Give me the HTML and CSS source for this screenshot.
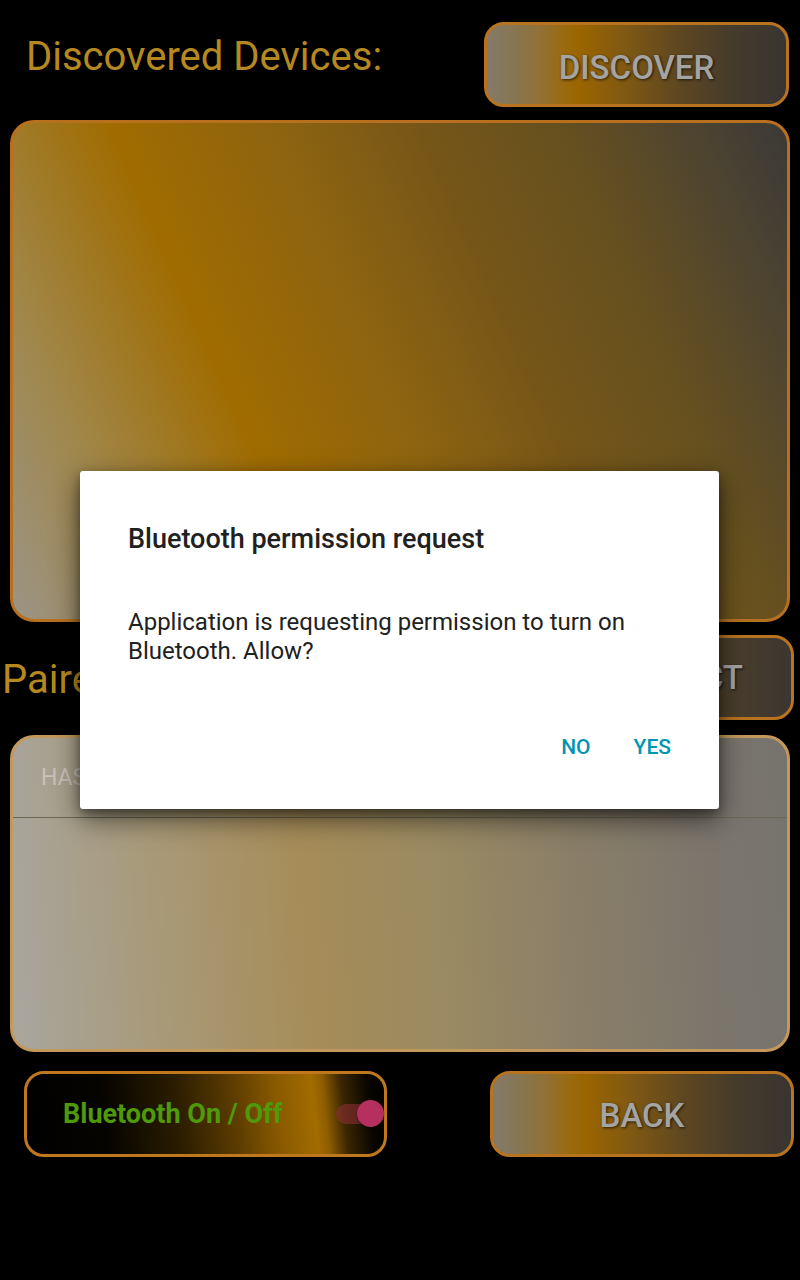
FILE: index.html
```html
<!DOCTYPE html>
<html>
<head>
<meta charset="utf-8">
<link rel="stylesheet" href="styles.css">
</head>
<body>
<div class="screen">
  <div class="head-row">
    <div class="heading">Discovered Devices:</div>
    <div class="btn btn-gold btn-discover">DISCOVER</div>
  </div>
  <div class="panel panel-discovered"></div>

  <div class="head-row paired-row">
    <div class="heading heading-paired">Paired Devices:</div>
    <div class="btn btn-gold btn-disconnect">DISCONNECT</div>
  </div>
  <div class="panel panel-paired">
    <div class="tab-head">HAS NO PAIRED DEVICES</div>
  </div>

  <div class="foot-row">
    <div class="toggle-btn">
      <span class="toggle-label">Bluetooth On / Off</span>
      <span class="switch"><span class="switch-track"></span><span class="switch-thumb"></span></span>
    </div>
    <div class="btn btn-gold btn-back">BACK</div>
  </div>

  <div class="dialog">
    <div class="dialog-title">Bluetooth permission request</div>
    <div class="dialog-msg">Application is requesting permission to turn on Bluetooth. Allow?</div>
    <div class="dialog-actions">
      <span class="dialog-btn">NO</span>
      <span class="dialog-btn">YES</span>
    </div>
  </div>
</div>
</body>
</html>
```

FILE: styles.css
```css
* { box-sizing: border-box; }
html, body { margin: 0; padding: 0; background: #000; }
body { font-family: Roboto, "Noto Sans", sans-serif; }

.screen {
  position: relative;
  width: 800px;
  height: 1280px;
  background: #000;
  overflow: hidden;
  display: flex;
  flex-direction: column;
}

.head-row {
  display: flex;
  justify-content: space-between;
  align-items: flex-start;
  padding: 22px 11px 0 26px;
}

.heading {
  margin-top: 13px;
  font-size: 40px;
  line-height: 44px;
  color: #b5891f;
  font-weight: 400;
}

.btn {
  display: flex;
  align-items: center;
  justify-content: center;
  height: 85px;
  border: 3px solid #b8731f;
  border-radius: 20px;
  font-size: 33px;
  font-weight: 500;
  color: #a4a4a4;
  text-shadow: 1px 1px 3px rgba(0,0,0,0.7);
}

.btn-discover {
  padding-top: 5px;
}

.btn-gold {
  width: 305px;
  background: linear-gradient(to right, #847a6a 0%, #867652 9%, #927034 18%, #9a6a0e 26%, #9b6500 31%, #7e5814 47%, #5e4720 64%, #453b2c 82%, #383430 100%);
}

.panel {
  margin: 13px 10px 0;
  border-radius: 24px;
  border: 3px solid #b8701f;
}

.panel-discovered {
  height: 502px;
  background: linear-gradient(66deg, #9b9486 0%, #a08648 15%, #a06c00 32%, #8e6410 48%, #765618 63%, #66501f 77%, #4e4430 90%, #3b3937 100%);
}

.paired-row {
  padding: 13px 6px 0 2px;
}

.heading-paired {
  margin-top: 23px;
}

.btn-disconnect {
  width: 304px;
  background: linear-gradient(to right, #6a5228 0%, #7a5a18 20%, #5e4820 55%, #4a3e2c 80%, #3c3631 100%);
}

.panel-paired {
  margin-top: 15px;
  height: 317px;
  border-color: #c3985d;
  background: linear-gradient(86deg, #a9a69f 0%, #a89a7a 18%, #a68c58 38%, #9a8a62 55%, #8a7e68 72%, #7c766c 88%, #76736e 100%);
  overflow: hidden;
}

.tab-head {
  height: 80px;
  padding: 26px 0 0 28px;
  font-size: 23px;
  line-height: 28px;
  color: #c6c2b8;
  border-bottom: 1px solid #6e6654;
}

.foot-row {
  display: flex;
  justify-content: space-between;
  padding: 19px 6px 0 24px;
}

.toggle-btn {
  width: 363px;
  height: 86px;
  border: 3px solid #c0781f;
  border-radius: 20px;
  background: linear-gradient(84deg, #000 0%, #060400 22%, #2a1c00 42%, #5c3c00 58%, #8a5a00 70%, #a36c00 80%, #8c5c00 83%, #3a2600 88%, #0a0600 95%, #000 100%);
  display: flex;
  align-items: center;
  padding: 0 0 0 36px;
}

.toggle-label {
  font-size: 27px;
  font-weight: 700;
  color: #4f9a0a;
  flex: 1;
}

.switch {
  position: relative;
  width: 48px;
  height: 28px;
}

.switch-track {
  position: absolute;
  left: 0;
  top: 4px;
  width: 36px;
  height: 20px;
  border-radius: 10px;
  background: rgba(140, 45, 55, 0.6);
}

.switch-thumb {
  position: absolute;
  left: 21px;
  top: 0;
  width: 27px;
  height: 27px;
  border-radius: 50%;
  background: #b5305f;
  box-shadow: 0 1px 2px rgba(0,0,0,0.4);
}

.btn-back {
  width: 304px;
  height: 86px;
  padding-top: 2px;
}

.dialog {
  position: absolute;
  left: 80px;
  top: 471px;
  width: 639px;
  height: 338px;
  background: #fff;
  border-radius: 3px;
  box-shadow: 0 10px 28px rgba(0,0,0,0.55), 0 4px 10px rgba(0,0,0,0.35);
  padding: 50px 48px 0 48px;
  display: flex;
  flex-direction: column;
}

.dialog-title {
  font-size: 27px;
  font-weight: 500;
  line-height: 36px;
  color: #212121;
}

.dialog-msg {
  margin-top: 51px;
  font-size: 24px;
  line-height: 29px;
  color: #212121;
}

.dialog-actions {
  display: flex;
  justify-content: flex-end;
  gap: 43px;
  margin-top: 69px;
}

.dialog-btn {
  font-size: 21px;
  font-weight: 500;
  color: #0095b0;
  line-height: 24px;
}
```
